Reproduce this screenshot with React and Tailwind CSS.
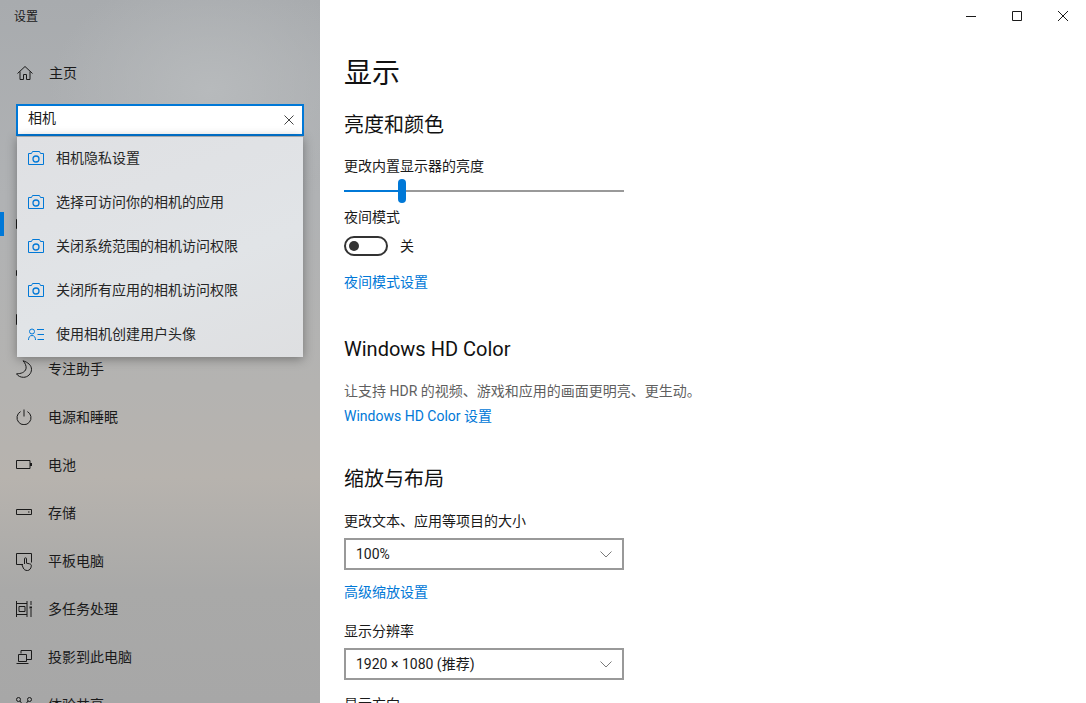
import React from "react";

const font = "font-['Roboto','Noto_Sans_CJK_SC',sans-serif]";

const Svg = ({ children, w = 16, h = 16, className = "" }) => (
  <svg
    width={w}
    height={h}
    viewBox={`0 0 ${w} ${h}`}
    fill="none"
    stroke="currentColor"
    strokeWidth="1"
    className={`shrink-0 ${className}`}
  >
    {children}
  </svg>
);

const HomeIcon = () => (
  <Svg>
    <path d="M.5 8.500 8 1.500l7.500 7M3 6.500v8h3.500v-5h3v5H13v-8" />
  </Svg>
);
const DisplayIcon = () => (
  <Svg>
    <path d="M.5 2.500h15v9H.5zM5 14.500h6M8 11.500v3" />
  </Svg>
);
const SoundIcon = () => (
  <Svg>
    <path d="M.5 5.500h3L8 1.500v13l-4.500-4h-3z" />
  </Svg>
);
const NotifyIcon = () => (
  <Svg>
    <path d="M.5 1.500h15v10h-8l-3 3v-3h-4z" />
  </Svg>
);
const MoonIcon = () => (
  <Svg h={18}>
    <path d="M7 .8c5 1.500 8.500 4.500 8.500 8.500 0 4.500-3.800 8-8 8-3 0-5.700-1.300-7-3.500 4.500 0 8.500-1.500 9.500-5 .6-2.500-.8-5.800-3-8z" />
  </Svg>
);
const PowerIcon = () => (
  <Svg>
    <path d="M4.600 2.600a7 7 0 1 0 6.800 0M8 .5v7" />
  </Svg>
);
const BatteryIcon = () => (
  <Svg>
    <path d="M.5 3.500h13.500v8H.5z" />
    <path d="M15 6v3" strokeWidth="2" />
  </Svg>
);
const StorageIcon = () => (
  <Svg>
    <path d="M.5 4.500h15v5H.5zM12 7h1.500" />
  </Svg>
);
const TabletIcon = () => (
  <Svg h={18} className="mt-0.5">
    <path d="M7 11.500H.5v-11h15v9M8.500 11V5.800a1 1 0 0 1 2 0v4.400l3 .6c1.400.3 2 .9 1.800 2.400-.3 2.300-1.800 4.300-3.800 4.300-2.500 0-3.500-1-4.200-2.500L6 12" />
  </Svg>
);
const MultiIcon = () => (
  <Svg>
    <path d="M.5 0v16M.5 2.500h10.500M.5 13.500h10.500M11 0v16M3 5.500h6v5H3zM15 0v4M15 8v8" />
    <path d="M13.500 6.500h3" strokeWidth="2" />
  </Svg>
);
const ProjectIcon = () => (
  <Svg>
    <path d="M5 4.500V1.500h10.500v9H11M2.500 5.500h8v7h-8zM.5 14.500h12" />
  </Svg>
);
const ShareIcon = () => (
  <Svg>
    <circle cx="2.500" cy="2.500" r="2" />
    <circle cx="13.500" cy="2.500" r="2" />
    <circle cx="8" cy="9" r="2" />
    <path d="M4 4 6.500 7.500M12 4 9.500 7.500" />
  </Svg>
);

const CameraIcon = () => (
  <svg width="16" height="14" viewBox="0 0 16 14" fill="none" stroke="#0078d7" strokeWidth="1" className="shrink-0">
    <path d="M.5 2.500h3l1-2h7l1 2h3v11H.5z" />
    <circle cx="8" cy="8" r="3" strokeWidth="1.300" />
  </svg>
);
const UserListIcon = () => (
  <svg width="16" height="13" viewBox="0 0 16 13" fill="none" stroke="#0078d7" strokeWidth="1" className="shrink-0">
    <circle cx="4" cy="3.500" r="2.500" />
    <path d="M.5 12c0-2.500 1-4.500 3.500-4.500s3.500 2 3.500 4.500M9 1.500h7M9.500 6.500h6.500M9.500 11.500h6.500" />
  </svg>
);

const navTop = [{ icon: <DisplayIcon />, active: true }, { icon: <SoundIcon /> }, { icon: <NotifyIcon /> }];

const navBottom = [
  { label: "专注助手", icon: <MoonIcon /> },
  { label: "电源和睡眠", icon: <PowerIcon /> },
  { label: "电池", icon: <BatteryIcon /> },
  { label: "存储", icon: <StorageIcon /> },
  { label: "平板电脑", icon: <TabletIcon /> },
  { label: "多任务处理", icon: <MultiIcon /> },
  { label: "投影到此电脑", icon: <ProjectIcon /> },
  { label: "体验共享", icon: <ShareIcon /> },
];

const results = [
  { label: "相机隐私设置", icon: <CameraIcon /> },
  { label: "选择可访问你的相机的应用", icon: <CameraIcon /> },
  { label: "关闭系统范围的相机访问权限", icon: <CameraIcon /> },
  { label: "关闭所有应用的相机访问权限", icon: <CameraIcon /> },
  { label: "使用相机创建用户头像", icon: <UserListIcon /> },
];

const NavRow = ({ item }) => (
  <div className="relative flex h-12 shrink-0 items-center gap-4 pl-4 text-sm text-[#1a1a1a]">
    {item.active && <div className="absolute left-0 top-[11px] h-6 w-1 bg-[#0078d7]" />}
    {item.icon}
    {item.label && <span>{item.label}</span>}
  </div>
);

const Select = ({ value }) => (
  <div className="flex h-8 w-[280px] items-center justify-between border-2 border-[#999999] bg-white px-2.5 text-sm text-[#1a1a1a]">
    <span>{value}</span>
    <svg width="12" height="7" viewBox="0 0 12 7" fill="none" stroke="#7a7a7a" strokeWidth="1">
      <path d="M.5.5 6 6l5.500-5.500" />
    </svg>
  </div>
);

const Sidebar = () => (
  <aside className="relative flex h-full w-[320px] shrink-0 flex-col overflow-hidden bg-[radial-gradient(ellipse_160px_120px_at_210px_90px,#b7babc_0%,transparent_100%),linear-gradient(180deg,#a8abae_0%,#b0b2b4_28%,#b4b3b1_55%,#b7b3ae_68%,#a9a9a8_84%,#a7a7a7_100%)]">
    <div className="flex h-[34px] shrink-0 items-center pl-[14px] text-xs text-[#1a1a1a]">设置</div>
    <div className="mt-[15px] flex h-12 shrink-0 items-center gap-4 pl-[17px] text-sm text-[#1a1a1a]">
      <HomeIcon />
      <span>主页</span>
    </div>
    <div className="relative z-10 mx-4 mt-[7px] flex h-8 shrink-0 items-center justify-between border-2 border-[#0078d7] bg-white pb-1 pl-2.5 pr-2 text-sm text-[#1a1a1a]">
      <span>相机</span>
      <svg width="10" height="10" viewBox="0 0 10 10" fill="none" stroke="#444444" strokeWidth="1" className="mt-1">
        <path d="M.5.500l9 9M9.500.500l-9 9" />
      </svg>
    </div>
    <div className="h-[65px] shrink-0" />
    {navTop.map((item, i) => (
      <NavRow key={i} item={item} />
    ))}
    {navBottom.map((item) => (
      <NavRow key={item.label} item={item} />
    ))}

    {/* search suggestions lie over the nav */}
    <div className="absolute left-[17px] top-[136px] z-20 w-[286px] border-t border-[#a8a9ab] bg-[linear-gradient(160deg,#dfe0e3,#e1e4e7_60%,#dedfe1)] shadow-[0_2px_10px_rgba(0,0,0,0.35)]">
      {results.map((r) => (
        <div key={r.label} className="flex h-11 items-center gap-3 pb-0.5 pl-[11px] text-sm text-[#262626]">
          {r.icon}
          <span>{r.label}</span>
        </div>
      ))}
    </div>
  </aside>
);

const TitleBar = () => (
  <div className="absolute right-0 top-0 flex h-8 items-center text-[#1a1a1a]">
    <div className="flex h-8 w-[46px] items-center justify-center">
      <svg width="10" height="10" viewBox="0 0 10 10" fill="none" stroke="currentColor">
        <path d="M0 5.500h10" />
      </svg>
    </div>
    <div className="flex h-8 w-[46px] items-center justify-center">
      <svg width="10" height="10" viewBox="0 0 10 10" fill="none" stroke="currentColor">
        <path d="M.5.500h9v9h-9z" />
      </svg>
    </div>
    <div className="flex h-8 w-[46px] items-center justify-center">
      <svg width="10" height="10" viewBox="0 0 10 10" fill="none" stroke="currentColor">
        <path d="M0 0l10 10M10 0 0 10" />
      </svg>
    </div>
  </div>
);

const Main = () => (
  <main className="relative h-full flex-1 overflow-hidden bg-white pl-6 text-sm text-[#1a1a1a]">
    <TitleBar />
    <h1 className="mt-[54px] h-10 text-[28px] leading-10 text-[#111111]">显示</h1>
    <h2 className="mt-[17px] h-7 text-xl leading-7 text-[#111111]">亮度和颜色</h2>
    <p className="mt-[17px] h-5 leading-5">更改内置显示器的亮度</p>

    <div className="relative mt-[3px] h-6 w-[280px]">
      <div className="absolute left-0 right-0 top-[11px] h-0.5 bg-[#999999]" />
      <div className="absolute left-0 top-[11px] h-0.5 w-[58px] bg-[#0078d7]" />
      <div className="absolute left-[54px] top-0 h-6 w-2 rounded-full bg-[#0078d7]" />
    </div>

    <p className="mt-[4px] h-5 leading-5">夜间模式</p>
    <div className="mt-[9px] flex h-5 items-center gap-3">
      <div className="flex h-5 w-11 items-center rounded-full border-2 border-[#333333] pl-[3px]">
        <div className="h-2.5 w-2.5 rounded-full bg-[#333333]" />
      </div>
      <span>关</span>
    </div>
    <a className="mt-[16px] block h-5 leading-5 text-[#0078d7]">夜间模式设置</a>

    <h2 className="mt-[43px] h-7 text-xl leading-7 text-[#111111]">Windows HD Color</h2>
    <p className="mt-[18px] h-5 leading-5 text-[#5f5f5f]">让支持 HDR 的视频、游戏和应用的画面更明亮、更生动。</p>
    <a className="mt-[5px] block h-5 leading-5 text-[#0078d7]">Windows HD Color 设置</a>

    <h2 className="mt-[39px] h-7 text-xl leading-7 text-[#111111]">缩放与布局</h2>
    <p className="mt-[18px] h-5 leading-5">更改文本、应用等项目的大小</p>
    <div className="mt-[7px]">
      <Select value="100%" />
    </div>
    <a className="mt-3 block h-5 leading-5 text-[#0078d7]">高级缩放设置</a>
    <p className="mt-[19px] h-5 leading-5">显示分辨率</p>
    <div className="mt-[7px]">
      <Select value="1920 × 1080 (推荐)" />
    </div>
    <p className="mt-3.5 h-5 leading-5">显示方向</p>
  </main>
);

const App = () => (
  <div className={`flex h-[703px] w-[1086px] overflow-hidden ${font}`}>
    <Sidebar />
    <Main />
  </div>
);

export default App;
